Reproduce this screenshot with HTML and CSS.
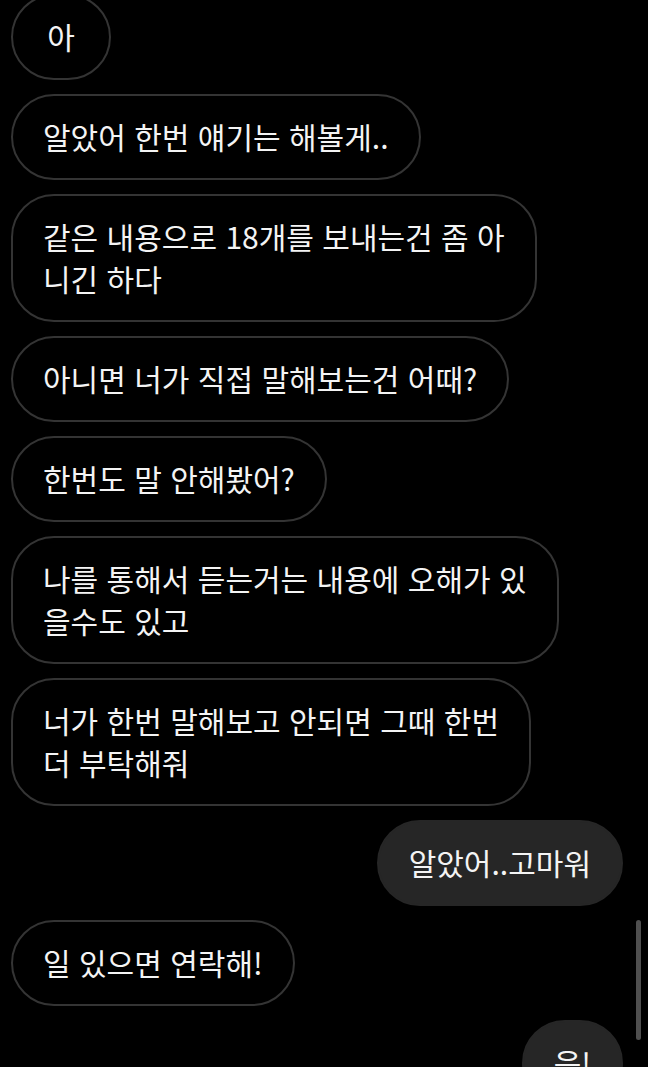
FILE: index.html
```html
<!DOCTYPE html>
<html lang="ko">
<head>
  <meta charset="UTF-8">
  <title>Chat</title>
  <link rel="stylesheet" href="styles.css">
</head>
<body>

  <div class="chat">
    <!-- Message thread -->
    <div class="thread">
      <div class="bubble">아</div>
      <div class="bubble">알았어 한번 얘기는 해볼게..</div>
      <div class="bubble">같은 내용으로 18개를 보내는건 좀 아<br>니긴 하다</div>
      <div class="bubble">아니면 너가 직접 말해보는건 어때?</div>
      <div class="bubble">한번도 말 안해봤어?</div>
      <div class="bubble">나를 통해서 듣는거는 내용에 오해가 있<br>을수도 있고</div>
      <div class="bubble">너가 한번 말해보고 안되면 그때 한번<br>더 부탁해줘</div>
      <div class="bubble sent">알았어..고마워</div>
      <div class="bubble">일 있으면 연락해!</div>
      <div class="bubble sent">응!</div>
    </div>

    <div class="scrollbar"></div>
  </div>

</body>
</html>
```

FILE: styles.css
```css
html, body {
  margin: 0;
  padding: 0;
  background-color: #000;
  height: 100%;
  overflow: hidden;
}

body {
  font-family: "Noto Sans CJK KR", "Noto Sans", sans-serif;
  color: #f4f4f4;
}

.chat {
  position: relative;
  height: 1067px;
  overflow: hidden;
}

.thread {
  display: flex;
  flex-direction: column;
  align-items: flex-start;
  gap: 14px;
  margin-top: -6px;
  padding: 0 25px 0 11px;
}

.bubble {
  font-size: 30px;
  line-height: 42px;
  padding: 19px 30px 21px 30px;
  min-width: 36px;
  text-align: center;
  border: 2px solid #343434;
  border-radius: 43px;
  white-space: nowrap;
}

.bubble:not(:first-child) {
  text-align: left;
}

.bubble.sent {
  align-self: flex-end;
  background-color: #262626;
  border-color: #262626;
}

.scrollbar {
  position: absolute;
  right: 7px;
  top: 920px;
  width: 5px;
  height: 120px;
  border-radius: 3px;
  background-color: #4f4f4f;
}
```
